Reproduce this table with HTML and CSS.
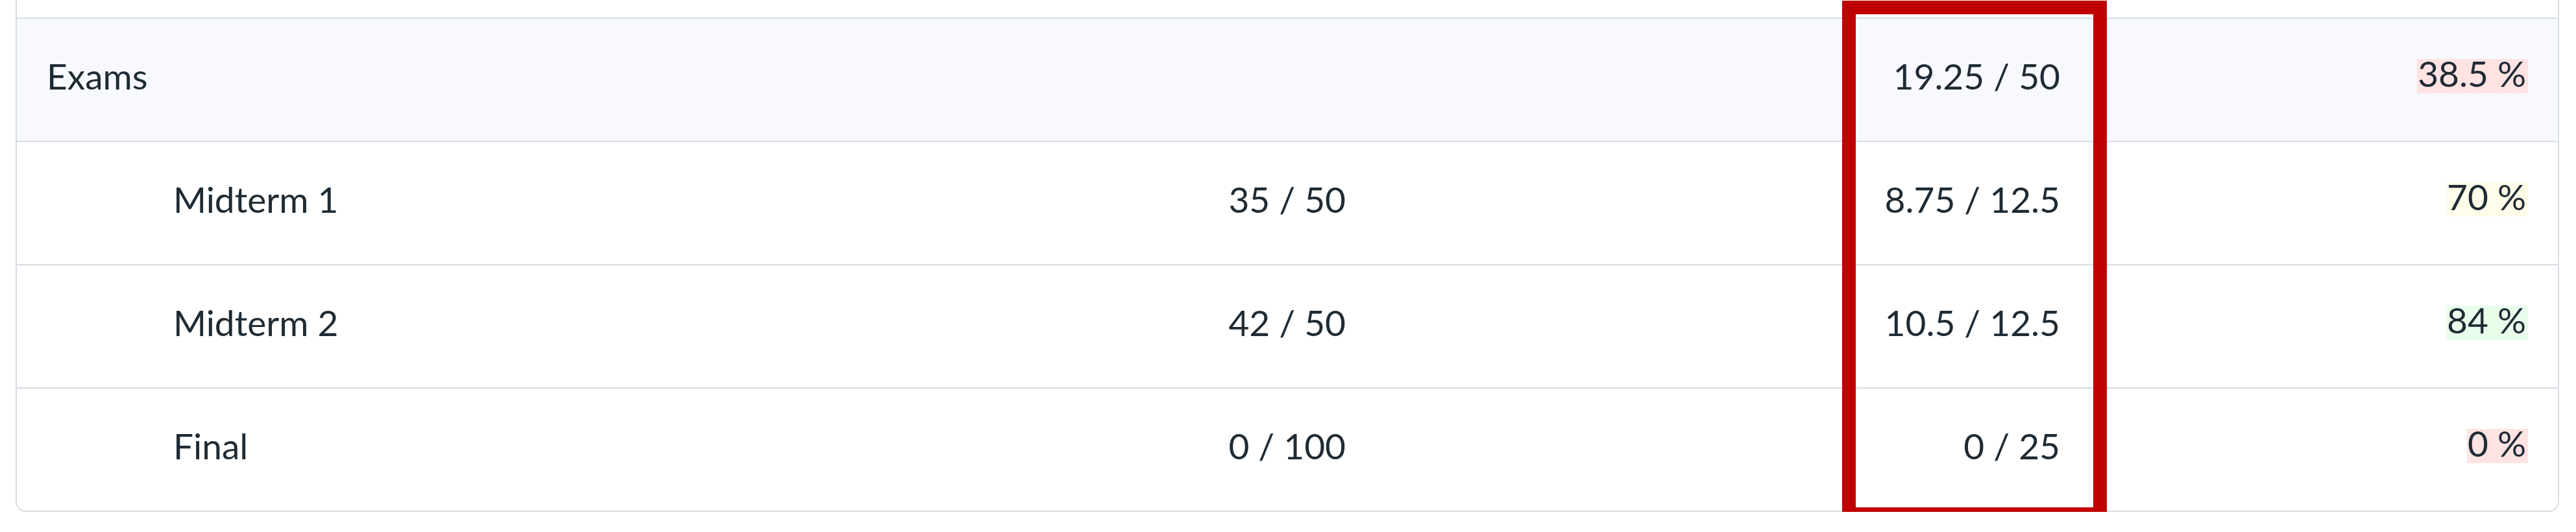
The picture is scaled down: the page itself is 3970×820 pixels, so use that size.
FILE: index.html
```html
<!DOCTYPE html>
<html lang="en">
<head>
<meta charset="utf-8">
<title>Grades – Exams</title>
<link rel="stylesheet" href="styles.css">
</head>
<body>
<div class="page">
  <div class="grades">
    <div class="row stub"></div>
    <div class="row group">
      <div class="cell name">Exams</div>
      <div class="cell score"></div>
      <div class="cell weighted">19.25 / 50</div>
      <div class="cell pct"><span class="badge bad">38.5 %</span></div>
    </div>
    <div class="row">
      <div class="cell name indent">Midterm 1</div>
      <div class="cell score">35 / 50</div>
      <div class="cell weighted">8.75 / 12.5</div>
      <div class="cell pct"><span class="badge mid">70 %</span></div>
    </div>
    <div class="row">
      <div class="cell name indent">Midterm 2</div>
      <div class="cell score">42 / 50</div>
      <div class="cell weighted">10.5 / 12.5</div>
      <div class="cell pct"><span class="badge good">84 %</span></div>
    </div>
    <div class="row">
      <div class="cell name indent">Final</div>
      <div class="cell score">0 / 100</div>
      <div class="cell weighted">0 / 25</div>
      <div class="cell pct"><span class="badge bad">0 %</span></div>
    </div>
  </div>
  <div class="callout" aria-hidden="true"></div>
</div>
</body>
</html>
```

FILE: styles.css
```css
html, body {
  margin: 0;
  padding: 0;
  background: #ffffff;
}

body {
  font-family: Lato, "Open Sans", sans-serif;
  color: #1f2b34;
}

.page {
  position: relative;
  padding: 0 26px 0 24px;
}

.grades {
  border: 2px solid #d7dde5;
  border-top: 0;
  border-radius: 0 0 16px 16px;
  overflow: hidden;
  background: #ffffff;
}

.row {
  display: grid;
  grid-template-columns: 1374px 720px 1101px 721px;
  height: 188px;
  border-top: 2px solid #d7dde5;
}

.row.stub {
  height: 27px;
  border-top: 0;
}

.row.group {
  background: #f8f9fe;
}

.cell {
  display: flex;
  align-items: center;
  font-size: 55px;
  line-height: 62px;
  padding-bottom: 12px;
  white-space: nowrap;
}

.name {
  padding-left: 46px;
}

.name.indent {
  padding-left: 241px;
}

.score,
.weighted,
.pct {
  justify-content: flex-end;
  padding-right: 46px;
}

.badge {
  display: inline-block;
  height: 53px;
  line-height: 44px;
  padding: 0 3px 0 1px;
}

.badge.bad {
  background: #ffe3e3;
}

.badge.mid {
  background: #fffdea;
}

.badge.good {
  background: #e9fdeb;
}

.callout {
  position: absolute;
  left: 2839px;
  top: 1px;
  width: 366px;
  height: 760px;
  border: 21px solid #c00000;
}
```
